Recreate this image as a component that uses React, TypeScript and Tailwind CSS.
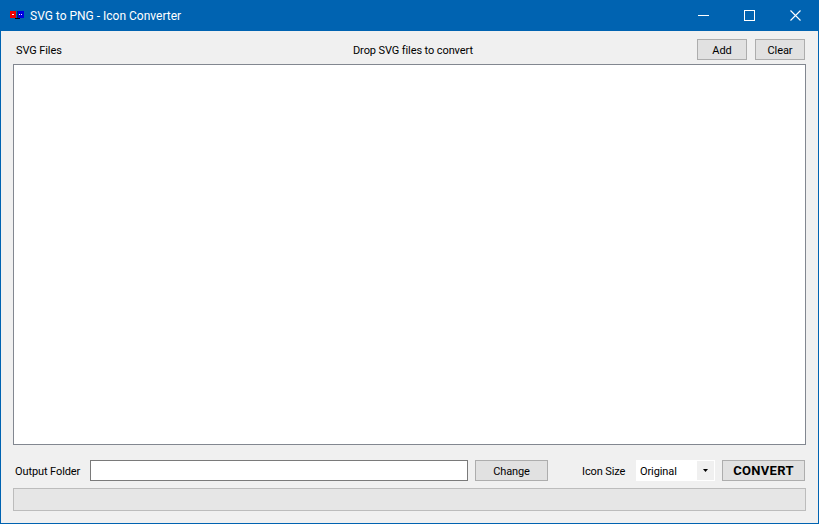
export default function App() {
  const font = { fontFamily: 'Roboto, "Noto Sans", sans-serif' };
  return (
    <div style={font} className="flex h-[524px] w-[819px] flex-col overflow-hidden border border-t-0 border-[#0063b1] bg-[#f0f0f0] text-[11px] leading-none tracking-[-0.1px] text-[#000]">
      <div className="flex h-[31px] shrink-0 items-center bg-[#0063b1] tracking-normal text-white">
        <svg width="16" height="16" viewBox="0 0 16 16" className="ml-[8px] mt-[1px]" aria-hidden="true">
          <rect x="1" y="3" width="6" height="7" fill="#f00000" />
          <rect x="9" y="3" width="6" height="7" fill="#0000e0" />
          <rect x="6" y="10" width="5" height="1" fill="#000" />
          <rect x="8" y="3" width="1" height="7" fill="#0d2a5a" />
          <rect x="3" y="6" width="2" height="1" fill="#fff" />
          <rect x="10" y="6" width="1" height="1" fill="#fff" />
          <rect x="12" y="6" width="1" height="1" fill="#fff" />
        </svg>
        <span className="ml-[5px] text-[12px]">SVG to PNG - Icon Converter</span>
        <div className="ml-auto flex">
          <div className="flex h-[31px] w-[46px] items-center justify-center">
            <svg width="11" height="11" viewBox="0 0 11 11" aria-hidden="true"><rect x="0" y="5" width="11" height="1" fill="#fff" /></svg>
          </div>
          <div className="flex h-[31px] w-[46px] items-center justify-center">
            <svg width="11" height="11" viewBox="0 0 11 11" aria-hidden="true"><rect x="0.5" y="0.5" width="10" height="10" fill="none" stroke="#fff" /></svg>
          </div>
          <div className="flex h-[31px] w-[46px] items-center justify-center">
            <svg width="11" height="11" viewBox="0 0 11 11" aria-hidden="true"><path d="M0.5 0.5 L10.5 10.5 M10.5 0.5 L0.5 10.5" stroke="#fff" strokeWidth="1.1" fill="none" /></svg>
          </div>
        </div>
      </div>
      <div className="flex min-h-0 flex-1 flex-col px-[12px]">
        <div className="flex h-[33px] shrink-0 items-center pt-[4px]">
          <span className="ml-[3px] w-[337px] pt-[1px]">SVG Files</span>
          <span className="pt-[1px]">Drop SVG files to convert</span>
          <button className="ml-auto h-[21px] w-[50px] border border-[#adadad] bg-[#e1e1e1] pt-[1px]">Add</button>
          <button className="ml-[8px] mr-[1px] h-[21px] w-[50px] border border-[#adadad] bg-[#e1e1e1] pt-[1px]">Clear</button>
        </div>
        <div className="h-[381px] w-[793px] shrink-0 border border-[#828790] bg-white" />
        <div className="mt-[15px] flex h-[21px] w-[793px] shrink-0 items-center">
          <span className="ml-[2px] w-[75px] whitespace-nowrap pt-[1px]">Output Folder</span>
          <div className="h-[21px] w-[378px] border border-[#7a7a7a] bg-white" />
          <button className="ml-[7px] h-[21px] w-[73px] border border-[#adadad] bg-[#e1e1e1] pt-[1px]">Change</button>
          <span className="ml-[34px] w-[54px] whitespace-nowrap pt-[1px]">Icon Size</span>
          <div className="flex h-[21px] w-[79px] items-center bg-white pl-[4px]">
            <span className="pt-[1px]">Original</span>
            <div className="ml-auto mr-[1px] flex h-[19px] w-[17px] items-center justify-center bg-[#f0f0f0]">
              <svg width="5" height="3" viewBox="0 0 5 3" aria-hidden="true"><path d="M0 0H5L2.5 3Z" fill="#000" /></svg>
            </div>
          </div>
          <button className="ml-[7px] h-[21px] w-[83px] border border-[#adadad] bg-[#e1e1e1] text-[13px] font-bold tracking-[0.3px]">CONVERT</button>
        </div>
        <div className="mt-[7px] h-[23px] w-[793px] shrink-0 border border-[#bcbcbc] bg-[#e6e6e6]" />
      </div>
    </div>
  );
}
